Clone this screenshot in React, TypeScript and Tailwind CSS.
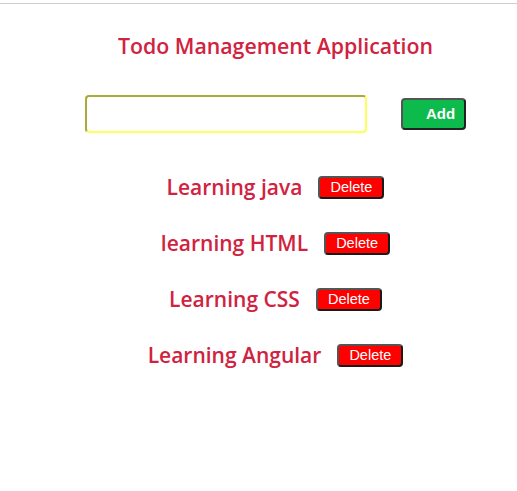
import React, { useState } from 'react';

const initialTodos = ['Learning java', 'learning HTML', 'Learning CSS', 'Learning Angular'];

export default function App() {
  const [todos, setTodos] = useState<string[]>(initialTodos);
  const [text, setText] = useState('');

  const add = () => {
    if (!text.trim()) return;
    setTodos([...todos, text]);
    setText('');
  };

  return (
    <div className="min-h-[491px] bg-white border-t border-[#cfcfcf] mt-[3px] font-['Open_Sans',sans-serif]">
      <div className="flex flex-col items-center pl-[34px]">
        {/* Title */}
        <h1 className="mt-[28px] text-[21.3px] font-semibold text-[#d1223f] leading-[28px]">
          Todo Management Application
        </h1>

        {/* Input row */}
        <div className="mt-[35px] flex items-center gap-[34px]">
          <input
            value={text}
            onChange={(e) => setText(e.target.value)}
            className="w-[282px] h-[38px] rounded-[4px] border-2 border-[#ffff5a] [border-style:inset] outline-none px-2"
          />
          <button
            onClick={add}
            className="w-[65px] h-[32px] rounded-[4px] bg-[#0cbb4b] border-2 border-t-[#555] border-l-[#555] border-b-[#222] border-r-[#222] text-white font-bold text-[15px] pl-[14px] font-['Liberation_Sans',sans-serif]"
          >
            Add
          </button>
        </div>

        {/* Todo list */}
        <ul className="mt-[40px] flex flex-col items-center gap-[28px]">
          {todos.map((t, i) => (
            <li key={i} className="flex items-center gap-[16px] h-[28px]">
              <span className="text-[21px] font-semibold text-[#d1223f] leading-[28px]">{t}</span>
              <button
                onClick={() => setTodos(todos.filter((_, j) => j !== i))}
                className="w-[66px] h-[23px] rounded-[4px] bg-[#ff0000] border-2 border-t-[#555] border-l-[#555] border-b-[#1a1a1a] border-r-[#1a1a1a] text-white text-[14.5px] leading-none font-['Liberation_Sans',sans-serif]"
              >
                Delete
              </button>
            </li>
          ))}
        </ul>
      </div>
    </div>
  );
}
